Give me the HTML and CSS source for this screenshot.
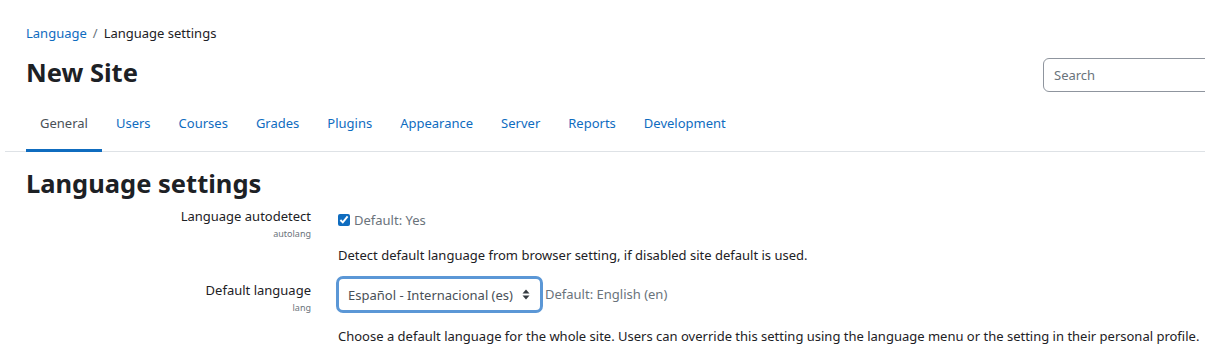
FILE: index.html
```html
<!DOCTYPE html>
<html lang="en">

<head>
    <meta charset="UTF-8">
    <title>Language settings</title>
    <link rel="stylesheet" href="styles.css">
</head>

<body>
    <div class="page-header">
        <nav class="breadcrumb">
            <a href="#">Language</a>
            <span class="divider">/</span>
            <span>Language settings</span>
        </nav>
        <div class="header-row">
            <h1>New Site</h1>
            <input type="text" class="search-input" placeholder="Search">
        </div>
    </div>

    <!-- 二级导航 -->
    <ul class="tabs">
        <li><a href="#" class="tab active">General</a></li>
        <li><a href="#" class="tab">Users</a></li>
        <li><a href="#" class="tab">Courses</a></li>
        <li><a href="#" class="tab">Grades</a></li>
        <li><a href="#" class="tab">Plugins</a></li>
        <li><a href="#" class="tab">Appearance</a></li>
        <li><a href="#" class="tab">Server</a></li>
        <li><a href="#" class="tab">Reports</a></li>
        <li><a href="#" class="tab">Development</a></li>
    </ul>

    <div class="content">
        <h2>Language settings</h2>

        <div class="setting">
            <div class="setting-label">
                <label>Language autodetect</label>
                <span class="setting-name">autolang</span>
            </div>
            <div class="setting-body">
                <div class="setting-control">
                    <label class="check-label"><input type="checkbox" checked> Default: Yes</label>
                </div>
                <p class="setting-desc">Detect default language from browser setting, if disabled site default is used.</p>
            </div>
        </div>

        <div class="setting">
            <div class="setting-label">
                <label>Default language</label>
                <span class="setting-name">lang</span>
            </div>
            <div class="setting-body">
                <div class="setting-control select-row">
                    <div class="select-box">
                        <span>Español - Internacional (es)</span>
                        <svg class="select-arrow" width="8" height="11" viewBox="0 0 8 11">
                            <path d="M4 0.5 L7.5 4.5 H0.5 Z M4 10.5 L0.5 6.5 H7.5 Z" fill="#343a40"/>
                        </svg>
                    </div>
                    <span class="default-note">Default: English (en)</span>
                </div>
                <p class="setting-desc">Choose a default language for the whole site. Users can override this setting using the language menu or the setting in their personal profile.</p>
            </div>
        </div>
    </div>
</body>

</html>
```

FILE: styles.css
```css
body {
    font-family: "Noto Sans", "Open Sans", sans-serif;
    font-size: 13px;
    color: #1d2125;
    margin: 0;
    padding: 0;
    background-color: #fff;
}

a {
    color: #0f6cbf;
    text-decoration: none;
}

.page-header {
    padding: 23px 0 0 26px;
}

.breadcrumb {
    display: flex;
    align-items: center;
    gap: 6px;
    line-height: 20px;
}

.breadcrumb .divider {
    color: #6a737b;
}

.header-row {
    display: flex;
    align-items: center;
    justify-content: space-between;
    margin-top: 9px;
}

h1 {
    font-size: 25.5px;
    font-weight: 700;
    margin: 0;
    line-height: 32px;
}

.search-input {
    width: 170px;
    height: 34px;
    box-sizing: border-box;
    margin-right: -8px;
    margin-top: 6px;
    padding: 0 10px;
    border: 1px solid #8f959e;
    border-radius: 6px;
    font-family: inherit;
    font-size: 13px;
    color: #495057;
}

.search-input::placeholder {
    color: #6a737b;
}

.tabs {
    list-style: none;
    display: flex;
    margin: 11px 0 0 5px;
    padding: 0 0 0 21px;
    border-bottom: 1px solid #dee2e6;
}

.tab {
    display: block;
    padding: 10px 14px 16px;
    line-height: 20px;
    border-bottom: 3px solid transparent;
    margin-bottom: -1px;
}

.tab.active {
    color: #495057;
    border-bottom-color: #0f6cbf;
}

.content {
    padding: 0 26px;
}

h2 {
    font-size: 25.5px;
    font-weight: 700;
    margin: 15px 0 6px;
    line-height: 32px;
}

.setting {
    display: flex;
    margin-bottom: 14px;
}

.setting-label {
    width: 285px;
    flex-shrink: 0;
    text-align: right;
    display: flex;
    flex-direction: column;
    padding-top: 1px;
}

.setting-label label {
    line-height: 20px;
}

.setting-name {
    font-size: 9px;
    color: #6a737b;
    line-height: 16px;
}

.setting-body {
    padding-left: 27px;
    white-space: nowrap;
}

.setting-control {
    display: flex;
    align-items: center;
    min-height: 24px;
}

.select-row {
    margin-top: -3px;
}

.check-label {
    display: flex;
    align-items: center;
    gap: 4px;
    color: #6a737b;
    padding-top: 6px;
}

.check-label input {
    margin: 0;
    width: 12px;
    height: 12px;
    accent-color: #0f6cbf;
}

.setting-desc {
    margin: 16px 0 0;
    line-height: 20px;
}

.select-row + .setting-desc {
    margin-top: 13px;
}

.select-box {
    display: flex;
    align-items: center;
    gap: 8px;
    width: 207px;
    height: 37px;
    box-sizing: border-box;
    margin-left: -2px;
    padding: 0 10px 0 9px;
    border: 3px solid #5b97d6;
    border-radius: 7px;
    color: #495057;
    font-size: 13px;
}

.select-arrow {
    margin-left: auto;
}

.default-note {
    color: #6a737b;
    margin-left: 2px;
    margin-top: -2px;
}
```
